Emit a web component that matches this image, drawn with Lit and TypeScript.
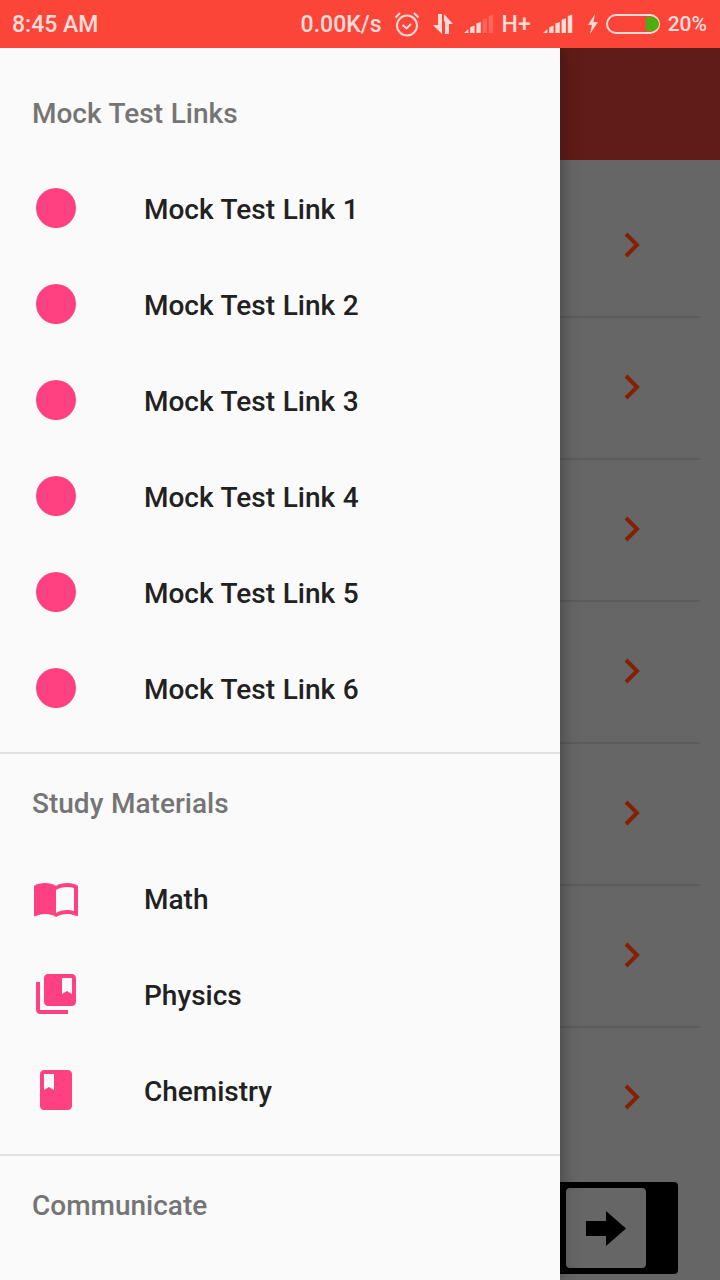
import { LitElement, html, css, svg } from "lit";
import { customElement } from "lit/decorators.js";

const BOOK = "M21 5c-1.11-.35-2.33-.5-3.5-.5-1.95 0-4.05.4-5.5 1.5-1.45-1.1-3.55-1.5-5.5-1.5S2.45 4.9 1 6v14.65c0 .25.25.5.5.5.1 0 .15-.05.25-.05C3.1 20.45 5.05 20 6.5 20c1.95 0 4.05.4 5.5 1.5 1.35-.85 3.8-1.5 5.5-1.5 1.65 0 3.35.3 4.75 1.05.1.05.15.05.25.05.25 0 .5-.25.5-.5V6c-.6-.45-1.25-.75-2-1zm0 13.5c-1.1-.35-2.3-.5-3.5-.5-1.7 0-4.15.65-5.5 1.5V8c1.35-.85 3.8-1.5 5.5-1.5 1.2 0 2.4.15 3.5.5v11.5z";
const COLLECTION = "M4 6H2v14c0 1.1.9 2 2 2h14v-2H4V6zM20 2H8c-1.1 0-2 .9-2 2v12c0 1.1.9 2 2 2h12c1.1 0 2-.9 2-2V4c0-1.1-.9-2-2-2zm0 10l-2.5-1.5L15 12V4h5v8z";
const BOOKMARK = "M18 2H6c-1.1 0-2 .9-2 2v16c0 1.1.9 2 2 2h12c1.1 0 2-.9 2-2V4c0-1.1-.9-2-2-2zM6 4h5v8l-2.5-1.5L6 12V4z";
const CIRCLE = "M12 2a10 10 0 1 0 0 20a10 10 0 1 0 0-20z";

const icon = (d: string) => html`<svg class="ic" viewBox="0 0 24 24" width="48" height="48"><path d=${d} fill="#ff4081"></path></svg>`;

/* Signal bars: first bar is a small wedge, each next one taller with a slanted top. */
const signal = (filled: number) => svg`
  ${[0, 1, 2, 3, 4].map((i) => {
    const x = i * 6.2;
    const top = 19 - (i + 1) * 3.7;
    const d = i === 0
      ? `M0 19 L4.400 ${top} V19 z`
      : `M${x} 19 V${top + 1.6} L${x + 4.4} ${top} V19 z`;
    return svg`<path d=${d} fill="#ffd9d4" opacity=${i < filled ? 1 : 0.22}></path>`;
  })}`;

@customElement("app-root")
export class AppRoot extends LitElement {
  static styles = css`
    :host { display: block; width: 720px; height: 1280px; overflow: hidden; font-family: Roboto, "Noto Sans", sans-serif; }
    .status { height: 48px; background: #fb4539; display: flex; align-items: center; justify-content: space-between; padding: 0 13px 0 12px; box-sizing: border-box; color: #ffdcd7; font-size: 23px; font-weight: 500; }
    .status-right { display: flex; align-items: center; }
    .status svg { display: block; flex: none; }
    .speed { margin-right: 12px; }
    .alarm { margin-right: 13px; }
    .updown { margin-right: 11px; }
    .sig1 { margin-right: 8px; }
    .hplus { margin-right: 12px; }
    .sig2 { margin-right: 14px; }
    .bolt { margin-right: 7px; }
    .batt { margin-right: 8px; }
    .pct { font-size: 21px; }
    .main { position: relative; height: 1232px; background: #666666; overflow: hidden; }
    .appbar { height: 112px; background: #601c18; }
    .list { padding-top: 16px; }
    .row { height: 142px; box-sizing: border-box; border-bottom: 2px solid #5c5c5c; margin-right: 20px; display: flex; align-items: center; justify-content: flex-end; padding: 0 56px 2px 0; }
    .row.last { border-bottom-color: transparent; }
    .next { margin: 12px 42px 0 560px; height: 92px; background: #000; border-radius: 0 4px 4px 0; padding: 6px 32px 6px 6px; box-sizing: border-box; }
    .next-inner { height: 80px; background: #666666; border-radius: 4px; display: flex; align-items: center; justify-content: center; }
    .drawer { position: absolute; left: 0; top: 0; bottom: 0; width: 560px; background: #fafafa; box-shadow: 0 0 18px rgba(0,0,0,.38); }
    .group { padding-bottom: 16px; border-bottom: 2px solid #e0e0e0; }
    .group.first { padding-top: 16px; }
    .group.end { border-bottom: none; }
    .head { height: 96px; display: flex; align-items: center; padding-left: 32px; font-size: 28px; font-weight: 500; color: #757575; word-spacing: 0.7px; }
    .item { height: 96px; display: flex; align-items: center; padding-left: 32px; font-size: 28px; font-weight: 500; color: #212121; word-spacing: 0.7px; }
    .label { padding-top: 2px; }
    .ic { display: block; margin-right: 64px; flex: none; }
  `;

  render() {
    const links = [1, 2, 3, 4, 5, 6];
    const study: [string, string][] = [["Math", BOOK], ["Physics", COLLECTION], ["Chemistry", BOOKMARK]];
    return html`
      <div class="status">
        <span>8:45 AM</span>
        <div class="status-right">
          <span class="speed">0.00K/s</span>
          <svg class="alarm" width="26" height="26" viewBox="0 0 26 26" fill="none" stroke="#ffd9d4" stroke-width="2">
            <circle cx="13" cy="14.500" r="10"></circle>
            <path d="M8.500 14l4 3.500 4.500-4.500"></path>
            <path d="M1.500 6.500L6 2M24.500 6.500L20 2"></path>
          </svg>
          <svg class="updown" width="20" height="20" viewBox="0 0 20 20" fill="#ffd9d4">
            <path d="M5 0h4v20L0 11h5z"></path>
            <path d="M11 0l9 10h-4v10h-4V7l-1 1z"></path>
          </svg>
          <svg class="sig1" width="30" height="20" viewBox="0 0 30 20">${signal(3)}</svg>
          <span class="hplus">H+</span>
          <svg class="sig2" width="30" height="20" viewBox="0 0 30 20">${signal(5)}</svg>
          <svg class="bolt" width="12" height="20" viewBox="0 0 12 20" fill="#ffd9d4"><path d="M8 0L1 11h4l-2 9 8-12H6.500z"></path></svg>
          <svg class="batt" width="54" height="20" viewBox="0 0 54 20">
            <rect x="1" y="1" width="52" height="18" rx="9" fill="none" stroke="#ffd9d4" stroke-width="2"></rect>
            <path d="M40 3h6a7 7 0 0 1 0 14h-6z" fill="#4caf10"></path>
          </svg>
          <span class="pct">20%</span>
        </div>
      </div>
      <div class="main">
        <div class="appbar"></div>
        <div class="list">
          ${[0, 1, 2, 3, 4, 5, 6].map((i) => html`
            <div class="row ${i === 6 ? "last" : ""}">
              <svg width="22" height="26" viewBox="0 0 22 26" fill="none" stroke="#842105" stroke-width="4"><path d="M4 2l11 11L4 24"></path></svg>
            </div>`)}
        </div>
        <div class="next">
          <div class="next-inner">
            <svg width="40" height="35" viewBox="0 0 40 35" fill="#000"><path d="M0 10h20V0l20 17.500L20 35V25H0z"></path></svg>
          </div>
        </div>
        <div class="drawer">
          <div class="group first">
            <div class="head"><span class="label">Mock Test Links</span></div>
            ${links.map((n) => html`<div class="item">${icon(CIRCLE)}<span class="label">Mock Test Link ${n}</span></div>`)}
          </div>
          <div class="group">
            <div class="head"><span class="label">Study Materials</span></div>
            ${study.map(([t, d]) => html`<div class="item">${icon(d)}<span class="label">${t}</span></div>`)}
          </div>
          <div class="group end">
            <div class="head"><span class="label">Communicate</span></div>
          </div>
        </div>
      </div>
    `;
  }
}
